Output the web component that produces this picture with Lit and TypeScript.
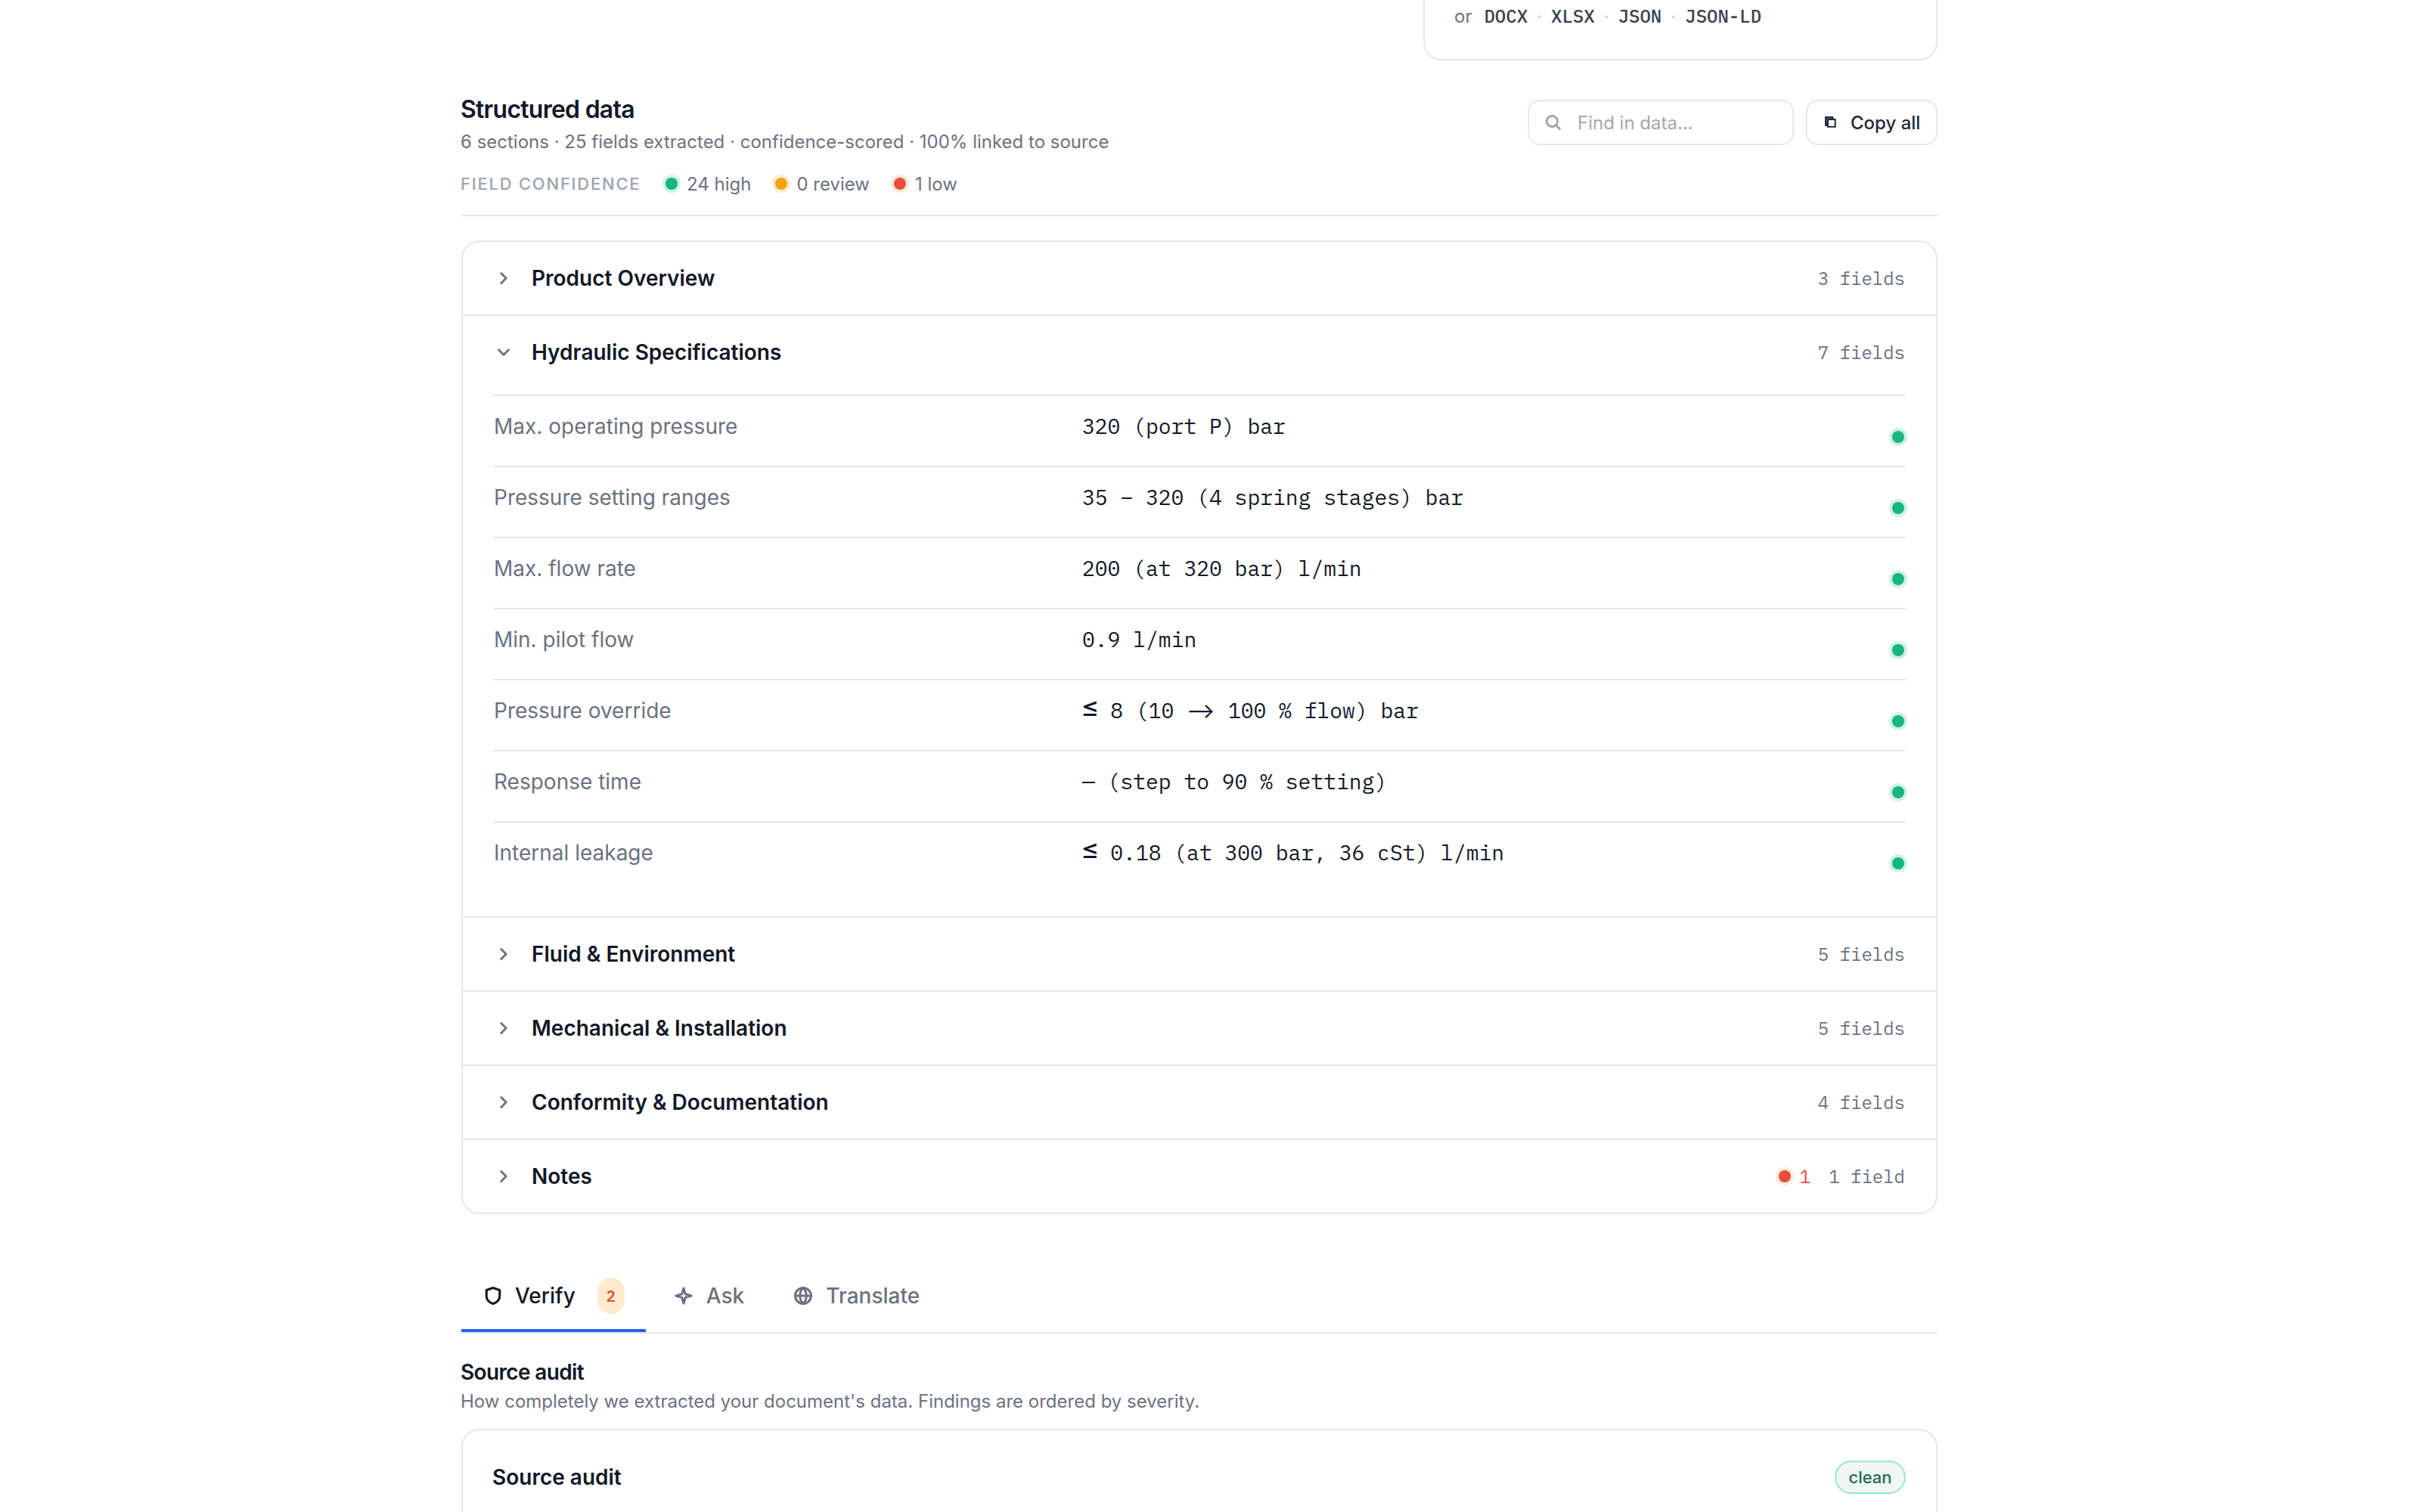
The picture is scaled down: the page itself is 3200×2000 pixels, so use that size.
import { LitElement, html, css, svg } from "lit";
import { customElement, property } from "lit/decorators.js";

type Level = "high" | "review" | "low";

interface Section {
  title: string;
  count: string;
  open?: boolean;
  low?: number;
}

const SECTIONS: Section[] = [
  { title: "Product Overview", count: "3 fields" },
  { title: "Hydraulic Specifications", count: "7 fields", open: true },
  { title: "Fluid & Environment", count: "5 fields" },
  { title: "Mechanical & Installation", count: "5 fields" },
  { title: "Conformity & Documentation", count: "4 fields" },
  { title: "Notes", count: "1 field", low: 1 },
];

const FIELDS: [string, string][] = [
  ["Max. operating pressure", "320 (port P) bar"],
  ["Pressure setting ranges", "35 – 320 (4 spring stages) bar"],
  ["Max. flow rate", "200 (at 320 bar) l/min"],
  ["Min. pilot flow", "0.9 l/min"],
  ["Pressure override", "≤ 8 (10 ⟶ 100 % flow) bar"],
  ["Response time", "— (step to 90 % setting)"],
  ["Internal leakage", "≤ 0.18 (at 300 bar, 36 cSt) l/min"],
];

const LEGEND: [Level, string][] = [
  ["high", "24 high"],
  ["review", "0 review"],
  ["low", "1 low"],
];

const ICONS = {
  search: svg`<circle cx="7" cy="7" r="4.4"/><path d="M10.200 10.200 13.200 13.200"/>`,
  copy: svg`<path d="M11.300 4.500V2H2.300v10.800H4.500" fill="#6b7280" stroke-linejoin="miter"/><path d="M2.300 2v10.800M2.300 2h9v3" /><rect x="5" y="5" width="9.700" height="9.700" fill="#fff" stroke-linejoin="miter"/>`,
  chevron: svg`<path d="M6 4l4 4-4 4"/>`,
  shield: svg`<path d="M8 2 13 3.700v4.300c0 3-1.900 5-5 6-3.100-1-5-3-5-6V3.700z"/>`,
  spark: svg`<path d="M8 2.200 9.300 6.700 13.800 8 9.300 9.300 8 13.800 6.700 9.300 2.200 8 6.700 6.700z"/>`,
  globe: svg`<circle cx="8" cy="8" r="6"/><path d="M2 8h12M8 2c1.900 1.800 2.400 3.800 2.400 6S9.900 12.200 8 14C6.100 12.200 5.600 10.200 5.600 8S6.100 3.800 8 2z"/>`,
};

@customElement("ui-icon")
export class UiIcon extends LitElement {
  @property() name: keyof typeof ICONS = "search";
  static styles = css`
    :host { display: block; width: 28px; height: 28px; flex: none; }
    svg {
      display: block; width: 100%; height: 100%; fill: none; stroke: currentColor;
      stroke-width: var(--icon-stroke, 1.75); stroke-linecap: round; stroke-linejoin: round;
    }
  `;
  render() {
    return html`<svg viewBox="0 0 16 16">${ICONS[this.name]}</svg>`;
  }
}

@customElement("confidence-dot")
export class ConfidenceDot extends LitElement {
  @property({ reflect: true }) level: Level = "high";
  static styles = css`
    :host {
      display: block; width: 16px; height: 16px; border-radius: 50%; flex: none;
      background: #17b57f; box-shadow: 0 0 0 4px #d0f1e5;
    }
    :host([level="review"]) { background: #f4a015; box-shadow: 0 0 0 4px #fdeccf; }
    :host([level="low"]) { background: #e84c41; box-shadow: 0 0 0 4px #faebd3; }
  `;
  render() {
    return html``;
  }
}

@customElement("app-root")
export class AppRoot extends LitElement {
  static styles = css`
    :host {
      display: block; height: 2000px; overflow: hidden; background: #fff; color: #111827;
      font-family: Inter, "Liberation Sans", sans-serif; font-size: 28px;
    }
    * { box-sizing: border-box; }
    .page { width: 1952px; margin-left: 610px; display: flex; flex-direction: column; }
    .mono { font-family: "IBM Plex Mono", "Liberation Mono", monospace; }

    .export {
      align-self: flex-end; width: 680px; height: 80px; padding: 4px 39px 0;
      border: 2px solid #e5e7eb; border-top: 0; border-radius: 0 0 24px 24px;
      display: flex; align-items: baseline; font-size: 24px; line-height: 34px; color: #6b7280;
    }
    .formats { display: flex; margin-left: 16px; font-size: 24px; font-weight: 500; color: #374151; }
    .formats i { width: 31px; text-align: center; font-style: normal; font-weight: 400; color: #d1d5db; }

    .head { display: flex; justify-content: space-between; margin: 44px 0 0 -1px; height: 90px; }
    h2 { margin: 0; font-size: 32px; line-height: 42px; font-weight: 600; letter-spacing: -0.75px; }
    .sub { margin: 0; font-size: 24px; line-height: 36px; color: #6b7280; }
    .head .sub { margin-top: 4px; }
    .tools { display: flex; gap: 16px; margin-top: 8px; }
    .search, .copy {
      height: 60px; border: 2px solid #e5e7eb; border-radius: 16px;
      display: flex; align-items: center; font-size: 24px;
    }
    .search { width: 352px; padding-left: 19px; gap: 19px; color: #a3a8b3; }
    .search ui-icon { width: 26px; height: 26px; --icon-stroke: 1.85; }
    .copy { width: 174px; padding-left: 22px; gap: 19px; font-weight: 500; color: #1f2937; }
    .copy ui-icon { width: 16px; height: 16px; --icon-stroke: 2; margin-top: -3px; }

    .legend {
      display: flex; align-items: center; height: 72px; padding-bottom: 12px;
      border-bottom: 2px solid #e5e7eb; font-size: 24px; color: #6b7280;
    }
    .legend .label { width: 271px; margin-left: -1px; font-size: 22px; font-weight: 500; letter-spacing: 1.76px; color: #9ca3af; }
    .legend .item { display: flex; align-items: center; gap: 12px; margin-right: 32px; }

    .sections { margin-top: 32px; border: 2px solid #e5e7eb; border-radius: 24px; }
    .section + .section { border-top: 2px solid #e5e7eb; }
    .bar { height: 96px; padding: 0 41px 0 40px; display: flex; align-items: center; }
    .bar ui-icon { width: 26px; height: 26px; margin-left: 1px; color: #6b7280; }
    .bar ui-icon.open { transform: rotate(90deg); }
    .bar h3 { margin: 0 auto 0 24px; font-size: 28px; font-weight: 600; }
    .bar .count { font-size: 24px; line-height: 32px; color: #6b7280; }
    .bar .flag { display: flex; align-items: center; gap: 12px; margin-right: 24px; font-size: 24px; line-height: 32px; color: #e84c41; }

    .fields { padding: 8px 40px 32px; }
    .field {
      display: grid; grid-template-columns: 778px 1fr 16px; height: 94px; padding: 20px 2px 0 1px;
      border-top: 2px solid #e5e7eb; line-height: 40px; color: #6b7280;
    }
    .field .value { color: #111827; white-space: pre; }
    .value .le, .value .arrow { display: inline-block; }
    .value .le { width: 20.500px; font: 400 37px/0 Inter, sans-serif; text-indent: -2px; transform: translateY(-2px); }
    .value .arrow { width: 38px; font: 400 28px/0 Inter, sans-serif; }
    .field confidence-dot { margin-top: 26px; }

    .tabs { display: flex; gap: 8px; height: 98px; margin-top: 60px; border-bottom: 2px solid #e5e7eb; }
    .tab { display: flex; align-items: center; gap: 16px; padding: 4px 28px 0; color: #6b7280; font-weight: 500; border-bottom: 4px solid transparent; }
    .tab.active { color: #111827; border-color: #2563eb; gap: 15px; }
    .badge {
      width: 36px; height: 48px; border-radius: 18px; margin-left: 14px; background: #fdebcc; color: #e84c41;
      display: flex; align-items: center; justify-content: center; font-size: 20px; font-weight: 600;
    }

    .audit { margin: 32px 0 0 -1px; }
    .audit h4 { margin: 0 0 2px; font-size: 28px; line-height: 38px; font-weight: 600; letter-spacing: -0.65px; }
    .card {
      margin-top: 18px; height: 200px; padding: 40px 40px 40px 39px; border: 2px solid #e5e7eb; border-radius: 24px;
      display: flex; justify-content: space-between; align-items: flex-start;
    }
    .card h5 { margin: 0; font-size: 28px; line-height: 44px; font-weight: 600; }
    .pill {
      width: 94px; height: 44px; border: 2px solid #98e8c9; border-radius: 22px; background: #eff6f3;
      display: flex; align-items: center; justify-content: center; font-size: 22px; font-weight: 500; color: #1c6b55;
    }
  `;

  private value(text: string) {
    return text.split(/([≤⟶])/).map((part) => {
      if (part === "≤") return html`<span class="le">${part}</span>`;
      if (part === "⟶") return html`<span class="arrow">${part}</span>`;
      return part;
    });
  }

  private section(s: Section) {
    return html`<div class="section">
      <div class="bar">
        <ui-icon name="chevron" class=${s.open ? "open" : ""}></ui-icon>
        <h3>${s.title}</h3>
        ${s.low ? html`<span class="flag mono"><confidence-dot level="low"></confidence-dot>${s.low}</span>` : ""}
        <span class="count mono">${s.count}</span>
      </div>
      ${s.open
        ? html`<div class="fields">
            ${FIELDS.map(
              ([name, value]) => html`<div class="field">
                <span>${name}</span><span class="value mono">${this.value(value)}</span><confidence-dot></confidence-dot>
              </div>`
            )}
          </div>`
        : ""}
    </div>`;
  }

  render() {
    return html`<div class="page">
      <div class="export">
        <span>or</span>
        <span class="formats mono"><span>DOCX</span><i>·</i><span>XLSX</span><i>·</i><span>JSON</span><i>·</i><span>JSON-LD</span></span>
      </div>
      <div class="head">
        <div>
          <h2>Structured data</h2>
          <p class="sub">6 sections · 25 fields extracted · confidence-scored · 100% linked to source</p>
        </div>
        <div class="tools">
          <div class="search"><ui-icon name="search"></ui-icon><span>Find in data...</span></div>
          <div class="copy"><ui-icon name="copy"></ui-icon><span>Copy all</span></div>
        </div>
      </div>
      <div class="legend">
        <span class="label">FIELD CONFIDENCE</span>
        ${LEGEND.map(([level, label]) => html`<span class="item"><confidence-dot level=${level}></confidence-dot>${label}</span>`)}
      </div>
      <div class="sections">${SECTIONS.map((s) => this.section(s))}</div>
      <div class="tabs">
        <div class="tab active"><ui-icon name="shield"></ui-icon><span>Verify</span><span class="badge mono">2</span></div>
        <div class="tab"><ui-icon name="spark"></ui-icon><span>Ask</span></div>
        <div class="tab"><ui-icon name="globe"></ui-icon><span>Translate</span></div>
      </div>
      <div class="audit">
        <h4>Source audit</h4>
        <p class="sub">How completely we extracted your document's data. Findings are ordered by severity.</p>
      </div>
      <div class="card"><h5>Source audit</h5><span class="pill">clean</span></div>
    </div>`;
  }
}
